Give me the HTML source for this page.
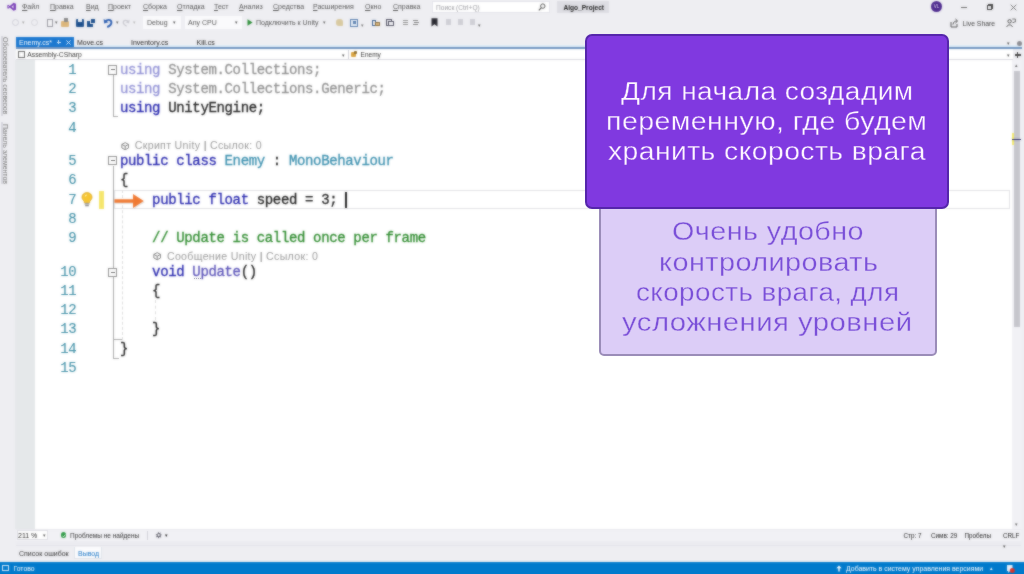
<!DOCTYPE html>
<html lang="ru">
<head>
<meta charset="utf-8">
<title>Enemy.cs - Algo_Project</title>
<style>
*{box-sizing:border-box;margin:0;padding:0}
html,body{width:1024px;height:574px;overflow:hidden;background:#eeeef2}
body{position:relative;font-family:"Liberation Sans",sans-serif;color:#1e1e1e}
#root{position:absolute;left:-8px;top:-8px;width:1040px;height:590px;background:#eeeef2;filter:url(#soft)}
#in{position:absolute;left:8px;top:8px;width:1024px;height:574px}
#ov{position:absolute;left:0;top:0;width:1024px;height:574px}
.a{position:absolute;white-space:nowrap}
.ui{font-size:7px;line-height:9px;color:#555}
.ui u{text-decoration-thickness:.6px;text-underline-offset:.6px}
.code{font-family:"Liberation Mono",monospace;font-size:14px;line-height:19px;letter-spacing:-.352px;white-space:pre;color:#222;-webkit-text-stroke:.3px currentColor}
.ln{font-family:"Liberation Mono",monospace;font-size:14px;line-height:19px;letter-spacing:-.352px;color:#3f8fa6;-webkit-text-stroke:.1px currentColor;text-align:right;width:40px;left:36.3px}
.kw{color:#2626ad}.ty{color:#3a8fae}.cm{color:#2c8a2c}.dim{opacity:.5}.fd{color:#5a52b8}
.lens{font-size:10.6px;line-height:12px;color:#9a9a9a;letter-spacing:.32px}
.ic{position:absolute}
.big{font-size:25px;line-height:30px;letter-spacing:.4px;transform-origin:0 0}
.w{color:#fdf6ff;-webkit-text-stroke:.3px #8039e0}
.v{color:#7a4fd8;-webkit-text-stroke:.3px #dccdf7}
#p1{left:620.7px;top:75.73px;transform:scaleX(1.1224)}
#p2{left:606.0px;top:105.63px;transform:scaleX(1.1395)}
#p3{left:607.7px;top:135.83px;transform:scaleX(1.1304)}
#q1{left:672.1px;top:216.23px;transform:scaleX(1.1486)}
#q2{left:658.7px;top:246.83px;transform:scaleX(1.1526)}
#q3{left:635.9px;top:277.03px;transform:scaleX(1.1108)}
#q4{left:621.8px;top:306.93px;transform:scaleX(1.1709)}
</style>
</head>
<body>
<svg width="0" height="0" style="position:absolute"><defs><filter id="soft" x="0" y="0" width="100%" height="100%" color-interpolation-filters="sRGB"><feGaussianBlur in="SourceGraphic" stdDeviation="0.8" result="b"/><feComposite in="b" in2="SourceGraphic" operator="arithmetic" k1="0" k2="0.6" k3="0.4" k4="0"/></filter></defs></svg>
<div id="root"><div id="in">
<!-- ===== title / menu bar ===== -->
<svg class="ic" style="left:6.5px;top:2px" width="9.5" height="9.5" viewBox="0 0 11 10"><path d="M7.6 0.3 L10.4 1.5 V8.5 L7.6 9.7 L3.2 5.8 L1.3 7.3 L0.4 6.8 V3.2 L1.3 2.7 L3.2 4.2 Z M7.6 3.1 L5.2 5 L7.6 6.9 Z M1.4 4 V6 L2.4 5 Z" fill="#7a3fb8" fill-rule="evenodd"/></svg>
<div class="a ui" style="left:22px;top:2.4px"><u>Ф</u>айл</div>
<div class="a ui" style="left:50px;top:2.4px"><u>П</u>равка</div>
<div class="a ui" style="left:86px;top:2.4px"><u>В</u>ид</div>
<div class="a ui" style="left:108px;top:2.4px"><u>П</u>роект</div>
<div class="a ui" style="left:143px;top:2.4px"><u>С</u>борка</div>
<div class="a ui" style="left:177px;top:2.4px"><u>О</u>тладка</div>
<div class="a ui" style="left:214px;top:2.4px"><u>Т</u>ест</div>
<div class="a ui" style="left:239px;top:2.4px"><u>А</u>нализ</div>
<div class="a ui" style="left:273px;top:2.4px"><u>С</u>редства</div>
<div class="a ui" style="left:313px;top:2.4px"><u>Р</u>асширения</div>
<div class="a ui" style="left:365px;top:2.4px"><u>О</u>кно</div>
<div class="a ui" style="left:393px;top:2.4px"><u>С</u>правка</div>
<div class="a" style="left:432px;top:1px;width:118px;height:12px;background:#fff;border:1px solid #e3e3ea"></div>
<div class="a ui" style="left:436px;top:2.5px;color:#9a9aa0;font-size:6.6px">Поиск (Ctrl+Q)</div>
<svg class="ic" style="left:538px;top:3px" width="8" height="8" viewBox="0 0 8 8"><circle cx="4.8" cy="3.1" r="2.2" fill="none" stroke="#555" stroke-width="1"/><path d="M3.2 4.8 L0.8 7.3" stroke="#555" stroke-width="1.2"/></svg>
<div class="a" style="left:557px;top:1px;width:52px;height:12px;background:#dddde3"></div>
<div class="a ui" style="left:563.4px;top:2.6px;color:#222;font-weight:bold;font-size:6.6px">Algo_Project</div>
<!-- window buttons -->
<div class="a" style="left:931px;top:1px;width:11px;height:11px;border-radius:50%;background:#4d2a8e"></div>
<div class="a" style="left:931px;top:3.5px;width:11px;text-align:center;font-size:4.5px;line-height:6px;color:#e8e0f5">VL</div>
<div class="a" style="left:961px;top:6.5px;width:6px;height:1px;background:#666"></div>
<div class="a" style="left:986.5px;top:5px;width:5px;height:5px;border:1px solid #444"></div>
<div class="a" style="left:988px;top:3.5px;width:5px;height:5px;border:1px solid #444;border-left:none;border-bottom:none"></div>
<svg class="ic" style="left:1010px;top:4px" width="7" height="7" viewBox="0 0 7 7"><path d="M0.7 0.7 L6.3 6.3 M6.3 0.7 L0.7 6.3" stroke="#777" stroke-width="1"/></svg>

<!-- ===== toolbar ===== -->
<div class="a" style="left:12px;top:19px;width:7px;height:7px;border-radius:50%;border:1.2px solid #cfcfd6"></div>
<div class="a ui" style="left:22px;top:18px;font-size:5px;color:#aaa">▾</div>
<div class="a" style="left:31px;top:19px;width:7px;height:7px;border-radius:50%;border:1.2px solid #d4d4da"></div>
<div class="a" style="left:46.5px;top:19px;width:6px;height:7.5px;border:1.2px solid #9a9aa2;background:#f2f2f5"></div>
<div class="a ui" style="left:55px;top:18px;font-size:5px;color:#666">▾</div>
<div class="a" style="left:61px;top:21px;width:8px;height:6px;background:#dcb67a;border-radius:1px"></div>
<div class="a" style="left:64px;top:18px;width:4px;height:4px;background:#8a8a8a"></div>
<div class="a" style="left:76px;top:19px;width:8px;height:8px;background:#1c4f8c;border-radius:1px"></div>
<div class="a" style="left:78px;top:19px;width:4px;height:3px;background:#e8eef6"></div>
<div class="a" style="left:87px;top:21px;width:6px;height:6px;background:#1c4f8c"></div>
<div class="a" style="left:90px;top:18px;width:6px;height:6px;background:#1c4f8c;border:1px solid #eeeef2"></div>
<svg class="ic" style="left:103px;top:17px" width="10" height="11" viewBox="0 0 10 11"><path d="M2 5.2 C3.5 1.8 8.5 2.4 8.4 5.6 C8.3 8 6 9.3 4.2 10" fill="none" stroke="#2a5db0" stroke-width="1.9"/><path d="M0.6 2 L1.2 6.6 L5.4 5.2 Z" fill="#2a5db0"/></svg>
<div class="a ui" style="left:116px;top:18px;font-size:5px;color:#666">▾</div>
<svg class="ic" style="left:122px;top:18px" width="8" height="9" viewBox="0 0 10 11"><path d="M8 5.2 C6.5 1.8 1.5 2.4 1.6 5.6 C1.7 8 4 9.3 5.8 10" fill="none" stroke="#c9c9d0" stroke-width="1.6"/><path d="M9.4 2 L8.8 6.6 L4.6 5.2 Z" fill="#c9c9d0"/></svg>
<div class="a ui" style="left:133px;top:18px;font-size:5px;color:#bbb">▾</div>
<div class="a" style="left:143px;top:16px;width:38px;height:13px;background:#fafafc"></div>
<div class="a ui" style="left:147px;top:18px">Debug</div>
<div class="a ui" style="left:173px;top:18px;font-size:5px;color:#555">▾</div>
<div class="a" style="left:185px;top:16px;width:57px;height:13px;background:#fafafc"></div>
<div class="a ui" style="left:188px;top:18px">Any CPU</div>
<div class="a ui" style="left:235px;top:18px;font-size:5px;color:#555">▾</div>
<svg class="ic" style="left:247px;top:19px" width="6" height="7" viewBox="0 0 6 7"><path d="M0.5 0.2 L5.6 3.5 L0.5 6.8 Z" fill="#2f8f3a"/></svg>
<div class="a ui" style="left:256px;top:18px">Подключить к Unity</div>
<div class="a ui" style="left:323px;top:18px;font-size:5px;color:#666">▾</div>
<div class="a" style="left:336px;top:19px;width:7px;height:7px;background:#d8c9a0;border-radius:3px 3px 1px 3px"></div>
<div class="a" style="left:350px;top:18.5px;width:8px;height:8px;border:1.3px solid #5a7fae;background:#e6edf6"></div>
<div class="a" style="left:352.5px;top:21px;width:3px;height:3px;background:#5a7fae"></div>
<div class="a ui" style="left:361px;top:21px;font-size:5px;color:#777">▾</div>
<div class="a" style="left:372px;top:20px;width:4px;height:6px;border:1px solid #3a5f8e"></div>
<div class="a" style="left:375px;top:22px;width:5px;height:4px;background:#dcb67a;border:.6px solid #8a7040"></div>
<div class="a" style="left:386px;top:19px;width:6px;height:7px;border:1px solid #556;background:#e8e8ee"></div>
<div class="a" style="left:388px;top:21px;width:6px;height:5px;border:1px solid #556;background:#f4f4f8"></div>
<div class="a" style="left:403px;top:20px;width:5px;height:1px;background:#999;box-shadow:0 2px 0 #999,0 4px 0 #999"></div>
<div class="a" style="left:413px;top:20px;width:5px;height:1px;background:#888;box-shadow:1px 2px 0 #888,0 4px 0 #888"></div>
<svg class="ic" style="left:431px;top:18px" width="7" height="9" viewBox="0 0 7 9"><path d="M0.5 0.3 H6.5 V8.6 L3.5 6.2 L0.5 8.6 Z" fill="#2a2a32"/></svg>
<div class="a" style="left:446px;top:19px;width:5px;height:6px;background:#cfcfd6"></div>
<div class="a" style="left:458px;top:19px;width:5px;height:6px;background:#cfcfd6"></div>
<div class="a" style="left:470px;top:19px;width:5px;height:6px;background:#cfcfd6"></div>
<div class="a ui" style="left:478px;top:21px;font-size:5px;color:#666">▾</div>
<!-- live share -->
<svg class="ic" style="left:950px;top:18px" width="9" height="10" viewBox="0 0 9 10"><path d="M1 4 V9 H7 V6" fill="none" stroke="#555" stroke-width="1"/><path d="M3 6.5 C3.2 4 5 3 7 3 M5.5 1 L7.6 3 L5.5 5" fill="none" stroke="#555" stroke-width="1"/></svg>
<div class="a ui" style="left:962.5px;top:19px;color:#444;font-size:6.8px">Live Share</div>
<svg class="ic" style="left:1006px;top:18px" width="10" height="10" viewBox="0 0 10 10"><circle cx="3.6" cy="3.3" r="1.7" fill="none" stroke="#555" stroke-width="1"/><path d="M0.8 9 C1 6.2 6 6.2 6.4 9" fill="none" stroke="#555" stroke-width="1"/><path d="M6.3 1 H9.4 V4 H8 L7 5 V4" fill="none" stroke="#555" stroke-width=".8"/></svg>

<!-- ===== left auto-hide strip ===== -->
<div class="a ui" style="left:10px;top:37px;transform-origin:0 0;transform:rotate(90deg);font-size:6.9px;color:#707070">Обозреватель серверов</div>
<div class="a ui" style="left:10px;top:124px;transform-origin:0 0;transform:rotate(90deg);font-size:6.9px;color:#707070">Панель элементов</div>
<div class="a" style="left:1px;top:36px;width:1.5px;height:80px;background:#d6d6de"></div>
<div class="a" style="left:1px;top:122px;width:1.5px;height:62px;background:#d6d6de"></div>

<!-- ===== document tabs ===== -->
<div class="a" style="left:74px;top:44.8px;width:948px;height:2.8px;background:#e0edf8"></div>
<div class="a" style="left:16px;top:36.5px;width:58px;height:12px;background:#1b78d0"></div>
<div class="a ui" style="left:19px;top:38px;color:#fff;font-size:7px">Enemy.cs*</div>
<div class="a" style="left:56.5px;top:42px;width:4px;height:1.4px;background:#cfe4f8"></div>
<div class="a" style="left:57.7px;top:40px;width:1.6px;height:4px;background:#cfe4f8"></div>
<svg class="ic" style="left:65.5px;top:40px" width="5" height="5" viewBox="0 0 5 5"><path d="M0.4 0.4 L4.6 4.6 M4.6 0.4 L0.4 4.6" stroke="#dcebfa" stroke-width="1"/></svg>
<div class="a ui" style="left:77px;top:38px;color:#222">Move.cs</div>
<div class="a ui" style="left:131px;top:38px;color:#222">Inventory.cs</div>
<div class="a ui" style="left:196.5px;top:38px;color:#222">Kill.cs</div>
<div class="a" style="left:16px;top:47.4px;width:1006px;height:1.9px;background:#6d92be"></div>
<div class="a ui" style="left:1006.5px;top:39px;font-size:5px;color:#555">▾</div>
<div class="a" style="left:1016.5px;top:40.5px;width:5px;height:5px;border-radius:50%;background:#8a8a90"></div>

<!-- ===== navigation bar ===== -->
<div class="a" style="left:16px;top:49.2px;width:997px;height:10.6px;background:#fff;border-bottom:1px solid #d9d9df"></div>
<div class="a" style="left:18.2px;top:50.6px;width:7px;height:7px;border:1px solid #666;border-top-width:1.8px"></div>
<div class="a ui" style="left:27.3px;top:50.3px;font-size:6.75px;color:#333">Assembly-CSharp</div>
<div class="a ui" style="left:342px;top:50.5px;font-size:5px;color:#555">▾</div>
<div class="a" style="left:347.5px;top:50px;width:1px;height:9px;background:#cfcfd6"></div>
<div class="a" style="left:351px;top:52px;width:5px;height:5px;background:#d9a441;border-radius:1px"></div>
<div class="a" style="left:354px;top:51px;width:3px;height:3px;background:#8a6a2a;border-radius:1px"></div>
<div class="a ui" style="left:360.6px;top:50.4px;font-size:6.5px;color:#333">Enemy</div>
<div class="a ui" style="left:1006.5px;top:50.5px;font-size:5px;color:#555">▾</div>
<div class="a" style="left:1014.5px;top:54.2px;width:6px;height:1.6px;background:#444"></div>
<div class="a" style="left:1016.7px;top:52px;width:1.6px;height:6px;background:#444"></div>

<!-- ===== editor surfaces ===== -->
<div class="a" style="left:16px;top:60px;width:996px;height:468.5px;background:#fff"></div>
<div class="a" style="left:15.3px;top:60px;width:20.2px;height:468.5px;background:#e5e8ea"></div>
<!-- scrollbar -->
<div class="a" style="left:1012px;top:60px;width:9.5px;height:468.5px;background:#f1f1f5"></div>
<div class="a" style="left:1014.3px;top:70.5px;width:6.2px;height:256.5px;background:#c6c6cc"></div>
<div class="a ui" style="left:1014.5px;top:61px;font-size:5px;color:#666">▴</div>
<div class="a ui" style="left:1014.5px;top:519.5px;font-size:5px;color:#666">▾</div>
<div class="a" style="left:1011.5px;top:133px;width:2.2px;height:12px;background:#f3ea6c"></div>
<div class="a" style="left:1011.5px;top:138.6px;width:9.5px;height:1.3px;background:#2b2b6a"></div>

<!-- current line box -->
<div class="a" style="left:113.5px;top:190.25px;width:896.5px;height:18.6px;border:1.3px solid #e2e2e5"></div>
<!-- outlining -->
<div class="a" style="left:113px;top:75px;width:1.1px;height:23px;background:#a9a9a9"></div>
<div class="a" style="left:113px;top:98px;width:1.1px;height:18px;background:#a9a9a9"></div>
<div class="a" style="left:113px;top:116px;width:5px;height:1.1px;background:#a9a9a9"></div>
<div class="a" style="left:113px;top:166px;width:1.1px;height:192px;background:#a9a9a9"></div>
<div class="a" style="left:113px;top:357.5px;width:6px;height:1.1px;background:#a9a9a9"></div>
<div class="a" style="left:113px;top:338.5px;width:8.5px;height:1.1px;background:#a9a9a9"></div>
<div class="a" style="left:108.2px;top:65.3px;width:9.3px;height:9.3px;border:1.1px solid #8f8f8f;background:#fff"></div>
<div class="a" style="left:110.5px;top:69.45px;width:4.7px;height:1px;background:#666"></div>
<div class="a" style="left:108.2px;top:156.1px;width:9.3px;height:9.3px;border:1.1px solid #8f8f8f;background:#fff"></div>
<div class="a" style="left:110.5px;top:160.25px;width:4.7px;height:1px;background:#666"></div>
<div class="a" style="left:108.2px;top:267.9px;width:9.3px;height:9.3px;border:1.1px solid #8f8f8f;background:#fff"></div>
<div class="a" style="left:110.5px;top:272.05px;width:4.7px;height:1px;background:#666"></div>
<!-- indent guides -->
<div class="a" style="left:122.3px;top:190px;width:0;height:150px;border-left:1.2px dashed #dcdcdc"></div>
<div class="a" style="left:154.6px;top:300px;width:0;height:20px;border-left:1.2px dashed #dcdcdc"></div>

<!-- change bar, bulb, arrow, caret -->
<div class="a" style="left:98.6px;top:190.6px;width:5.9px;height:18.8px;background:#f5e66c"></div>
<svg class="ic" style="left:80.5px;top:191.5px" width="12" height="15" viewBox="0 0 12 15"><path d="M6 0.6 C2.9 0.6 1 2.8 1 5.2 C1 7 2.2 8 3.2 9.4 V10.6 H8.8 V9.4 C9.8 8 11 7 11 5.2 C11 2.8 9.1 0.6 6 0.6 Z" fill="#f6c531" stroke="#d9a520" stroke-width=".8"/><path d="M4.2 4.6 C4.2 3.6 5 3 6 3" fill="none" stroke="#fdf0b0" stroke-width="1.1"/><rect x="3.6" y="11.2" width="4.8" height="1.4" fill="#8e8e8e"/><rect x="4.2" y="13" width="3.6" height="1.3" fill="#8e8e8e"/></svg>
<svg class="ic" style="left:112px;top:191px" width="36" height="20" viewBox="0 0 36 20"><path d="M2.4 8.2 H21.4 V3.4 L32 10 L21.4 16.6 V11.8 H2.4 Z" fill="#b9b9b9" opacity=".35" transform="translate(.8 1.2)"/><path d="M2.4 8.3 H21 V3 L31.8 10 L21 17 V11.7 H2.4 Z" fill="#f07a33"/></svg>
<div class="a" style="left:345.4px;top:191.8px;width:1.4px;height:16px;background:#222"></div>

<!-- code -->
<div class="a ln" style="top:60.87px">1</div>
<div class="a ln" style="top:80.12px">2</div>
<div class="a ln" style="top:99.37px">3</div>
<div class="a ln" style="top:118.62px">4</div>
<div class="a ln" style="top:152.12px">5</div>
<div class="a ln" style="top:171.37px">6</div>
<div class="a ln" style="top:190.62px">7</div>
<div class="a ln" style="top:209.87px">8</div>
<div class="a ln" style="top:229.12px">9</div>
<div class="a ln" style="top:262.62px">10</div>
<div class="a ln" style="top:281.87px">11</div>
<div class="a ln" style="top:301.12px">12</div>
<div class="a ln" style="top:320.37px">13</div>
<div class="a ln" style="top:339.62px">14</div>
<div class="a ln" style="top:358.87px">15</div>
<div class="a code" style="left:119.90px;top:60.87px"><span class="dim"><span class="kw">using</span> System.Collections;</span></div>
<div class="a code" style="left:119.90px;top:80.12px"><span class="dim"><span class="kw">using</span> System.Collections.Generic;</span></div>
<div class="a code" style="left:119.90px;top:99.37px"><span class="kw">using</span> UnityEngine;</div>
<div class="a code" style="left:119.90px;top:152.12px"><span class="kw">public</span> <span class="kw">class</span> <span class="ty">Enemy</span> : <span class="ty">MonoBehaviour</span></div>
<div class="a code" style="left:119.90px;top:171.37px">{</div>
<div class="a code" style="left:152.10px;top:190.62px"><span class="kw">public</span> <span class="kw">float</span> speed = 3;</div>
<div class="a code" style="left:152.10px;top:229.12px"><span class="cm">// Update is called once per frame</span></div>
<div class="a code" style="left:152.10px;top:262.62px"><span class="kw">void</span> <span class="fd">Update</span>()</div>
<div class="a code" style="left:152.10px;top:281.87px">{</div>
<div class="a code" style="left:152.10px;top:320.37px">}</div>
<div class="a code" style="left:119.90px;top:339.62px">}</div>
<div class="a lens" style="left:120.5px;top:139.28px"><svg width="8.4" height="8.4" viewBox="0 0 8 8" style="vertical-align:-1px;margin-right:2.6px"><path d="M4 0.6 L7.2 2.3 V5.7 L4 7.4 L0.8 5.7 V2.3 Z M0.8 2.3 L4 4 L7.2 2.3 M4 4 V7.4" fill="none" stroke="#7d7d7d" stroke-width=".9"/></svg> Скрипт Unity <span style="color:#6f6f6f">|</span> Ссылок: 0</div>
<div class="a lens" style="left:152.7px;top:249.78px"><svg width="8.4" height="8.4" viewBox="0 0 8 8" style="vertical-align:-1px;margin-right:2.6px"><path d="M4 0.6 L7.2 2.3 V5.7 L4 7.4 L0.8 5.7 V2.3 Z M0.8 2.3 L4 4 L7.2 2.3 M4 4 V7.4" fill="none" stroke="#7d7d7d" stroke-width=".9"/></svg> Сообщение Unity <span style="color:#6f6f6f">|</span> Ссылок: 0</div>
<div class="a" style="left:193.6px;top:278.4px;width:7px;height:0;border-top:1.3px dotted #6a6a8a"></div>

<!-- ===== editor bottom strip ===== -->
<div class="a" style="left:16px;top:528.5px;width:1005px;height:12.5px;background:#f1f1f5;border-top:1px solid #e9e9ee"></div>
<div class="a" style="left:16.5px;top:529.5px;width:31px;height:10.5px;background:#fff;border:1px solid #dedee4"></div>
<div class="a ui" style="left:18px;top:530.8px;color:#222">211 %</div>
<div class="a ui" style="left:43px;top:531px;font-size:5px;color:#555">▾</div>
<div class="a" style="left:60.7px;top:532.3px;width:5.8px;height:5.8px;border-radius:50%;background:#2f9a46"></div>
<svg class="ic" style="left:61.7px;top:533.6px" width="4" height="3.4" viewBox="0 0 4 3.4"><path d="M0.5 1.8 L1.5 2.8 L3.5 0.6" fill="none" stroke="#fff" stroke-width=".8"/></svg>
<div class="a ui" style="left:70px;top:530.8px;color:#333;font-size:6.5px">Проблемы не найдены</div>
<div class="a" style="left:146.7px;top:530.5px;width:1px;height:9px;background:#d0d0d8"></div>
<svg class="ic" style="left:155px;top:531.4px" width="8" height="8" viewBox="0 0 8 8"><path d="M3.6 0.8 L4 2.2 L5.6 1.6 L5.4 3.2 L7 3.8 L5.6 4.8 L6.2 6.4 L4.4 6 L3.6 7.4 L2.6 6 L1 6.2 L1.8 4.6 L0.6 3.4 L2.2 3 Z" fill="#6a6a74"/><circle cx="3.7" cy="4.1" r="1.1" fill="#f3f3f7"/></svg>
<div class="a ui" style="left:164.5px;top:531px;font-size:5px;color:#222">▾</div>
<div class="a ui" style="left:903.5px;top:530.8px;font-size:6.3px;color:#222">Стр: 7</div>
<div class="a ui" style="left:931px;top:530.8px;font-size:6.3px;color:#222">Симв: 29</div>
<div class="a ui" style="left:964.5px;top:530.8px;font-size:6.3px;color:#222">Пробелы</div>
<div class="a ui" style="left:1003px;top:530.8px;font-size:6.3px;color:#222">CRLF</div>

<!-- ===== tool window tabs ===== -->
<div class="a" style="left:16px;top:541px;width:1005px;height:5px;background:#ececf1;border-bottom:1px solid #e3e3e9"></div>
<div class="a ui" style="left:1002.5px;top:542px;font-size:5px;color:#555">▾</div>
<div class="a ui" style="left:19px;top:548.6px;color:#333">Список ошибок</div>
<div class="a" style="left:74px;top:546.5px;width:28px;height:12px;background:#fbfbfd;border:1px solid #dfe3ea;border-top:none"></div>
<div class="a ui" style="left:78px;top:548.6px;color:#1a76c6">Вывод</div>

<!-- ===== status bar ===== -->
<div class="a" style="left:-8px;top:562.3px;width:1040px;height:19.7px;background:#007acc"></div>
<div class="a" style="left:2px;top:565px;width:6.5px;height:6px;border:1px solid #dbe9f7;border-top-width:1.6px"></div>
<div class="a ui" style="left:13.5px;top:563.8px;color:#fff;font-size:6.8px">Готово</div>
<svg class="ic" style="left:836px;top:564.5px" width="6" height="7" viewBox="0 0 6 7"><path d="M3 0.4 L5.6 3.2 H3.7 V6.6 H2.3 V3.2 H0.4 Z" fill="#fff"/></svg>
<div class="a ui" style="left:846px;top:563.8px;color:#fff;font-size:6.95px">Добавить в систему управления версиями</div>
<div class="a ui" style="left:989.5px;top:563.5px;font-size:5px;color:#fff">▴</div>
<svg class="ic" style="left:1004px;top:563.6px" width="11" height="10" viewBox="0 0 11 10"><path d="M3 1 H8.5 V7 H6 L4.2 9 V7 H3 Z" fill="#e8f0fa"/><circle cx="8.3" cy="6.6" r="2.5" fill="#d9352c"/></svg>

</div></div>
<div id="ov">
<!-- ===== overlay cards ===== -->
<div class="a" style="left:599.1px;top:200px;width:337.6px;height:155.5px;background:#dccdf7;border:2px solid #9a8cb8;border-radius:5px"></div>
<div class="a" style="left:584.5px;top:34.2px;width:364px;height:174.8px;background:#8039e0;border:2.4px solid #5526ab;border-radius:7px"></div>
<div class="a big w" id="p1">Для начала создадим</div>
<div class="a big w" id="p2">переменную, где будем</div>
<div class="a big w" id="p3">хранить скорость врага</div>
<div class="a big v" id="q1">Очень удобно</div>
<div class="a big v" id="q2">контролировать</div>
<div class="a big v" id="q3">скорость врага, для</div>
<div class="a big v" id="q4">усложнения уровней</div>
</div>
</body>
</html>
